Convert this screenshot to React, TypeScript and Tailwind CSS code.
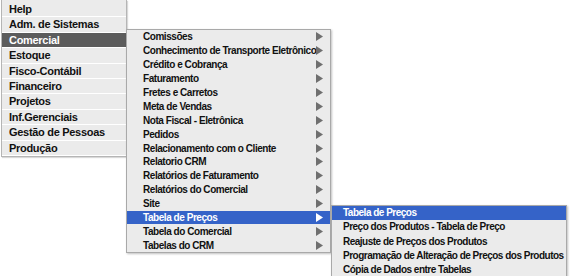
import React from "react";

const mainItems = [
  "Help",
  "Adm. de Sistemas",
  "Comercial",
  "Estoque",
  "Fisco-Contábil",
  "Financeiro",
  "Projetos",
  "Inf.Gerenciais",
  "Gestão de Pessoas",
  "Produção",
];

const comercialItems = [
  "Comissões",
  "Conhecimento de Transporte Eletrônico",
  "Crédito e Cobrança",
  "Faturamento",
  "Fretes e Carretos",
  "Meta de Vendas",
  "Nota Fiscal - Eletrônica",
  "Pedidos",
  "Relacionamento com o Cliente",
  "Relatorio CRM",
  "Relatórios de Faturamento",
  "Relatórios do Comercial",
  "Site",
  "Tabela de Preços",
  "Tabela do Comercial",
  "Tabelas do CRM",
];

const precoItems = [
  "Tabela de Preços",
  "Preço dos Produtos - Tabela de Preço",
  "Reajuste de Preços dos Produtos",
  "Programação de Alteração de Preços dos Produtos",
  "Cópia de Dados entre Tabelas",
];

function Arrow({ active }: { active: boolean }) {
  return (
    <svg width="7" height="9" viewBox="0 0 7 9" className="shrink-0">
      <polygon points="0,0 7,4.5 0,9" fill={active ? "#ffffff" : "#6f6f6f"} />
    </svg>
  );
}

export default function App() {
  return (
    <div className="relative w-[570px] h-[276px] overflow-hidden bg-white font-['Liberation_Sans',Arial,sans-serif] font-bold text-[#111]">
      {/* menu principal */}
      <div className="absolute left-[1px] top-0 w-[126px] pt-[2px] bg-[#ebebeb] border-l border-b border-r border-[#b5b5b5] shadow-[1px_1px_1px_rgba(0,0,0,0.15)]">
        {mainItems.map((item) => (
          <div
            key={item}
            className={`h-[15.4px] leading-[15px] pl-[7px] text-[11px] tracking-[-0.3px] border-b border-white whitespace-nowrap ${
              item === "Comercial" ? "bg-[#5c5c5c] text-white" : ""
            }`}
          >
            {item}
          </div>
        ))}
      </div>

      {/* submenu comercial */}
      <div className="absolute left-[126px] top-[29px] w-[205px] bg-[#ebebeb] border border-[#a9a9a9] shadow-[1px_1px_2px_rgba(0,0,0,0.25)]">
        {comercialItems.map((item) => {
          const active = item === "Tabela de Preços";
          return (
            <div
              key={item}
              className={`flex items-center justify-between h-[13.9px] pl-[16px] pr-[7px] text-[10px] tracking-[-0.45px] ${
                active ? "bg-[#3563c8] text-white" : ""
              }`}
            >
              <span className="whitespace-nowrap">{item}</span>
              <Arrow active={active} />
            </div>
          );
        })}
      </div>

      {/* submenu tabela de precos */}
      <div className="absolute left-[331px] top-[205px] w-[236px] bg-[#ebebeb] border border-[#a9a9a9] shadow-[1px_1px_2px_rgba(0,0,0,0.25)]">
        {precoItems.map((item, i) => (
          <div
            key={item}
            className={`h-[14.3px] leading-[14px] pl-[11px] text-[10px] tracking-[-0.5px] whitespace-nowrap ${
              i === 0 ? "bg-[#3563c8] text-white" : ""
            }`}
          >
            {item}
          </div>
        ))}
      </div>
    </div>
  );
}
